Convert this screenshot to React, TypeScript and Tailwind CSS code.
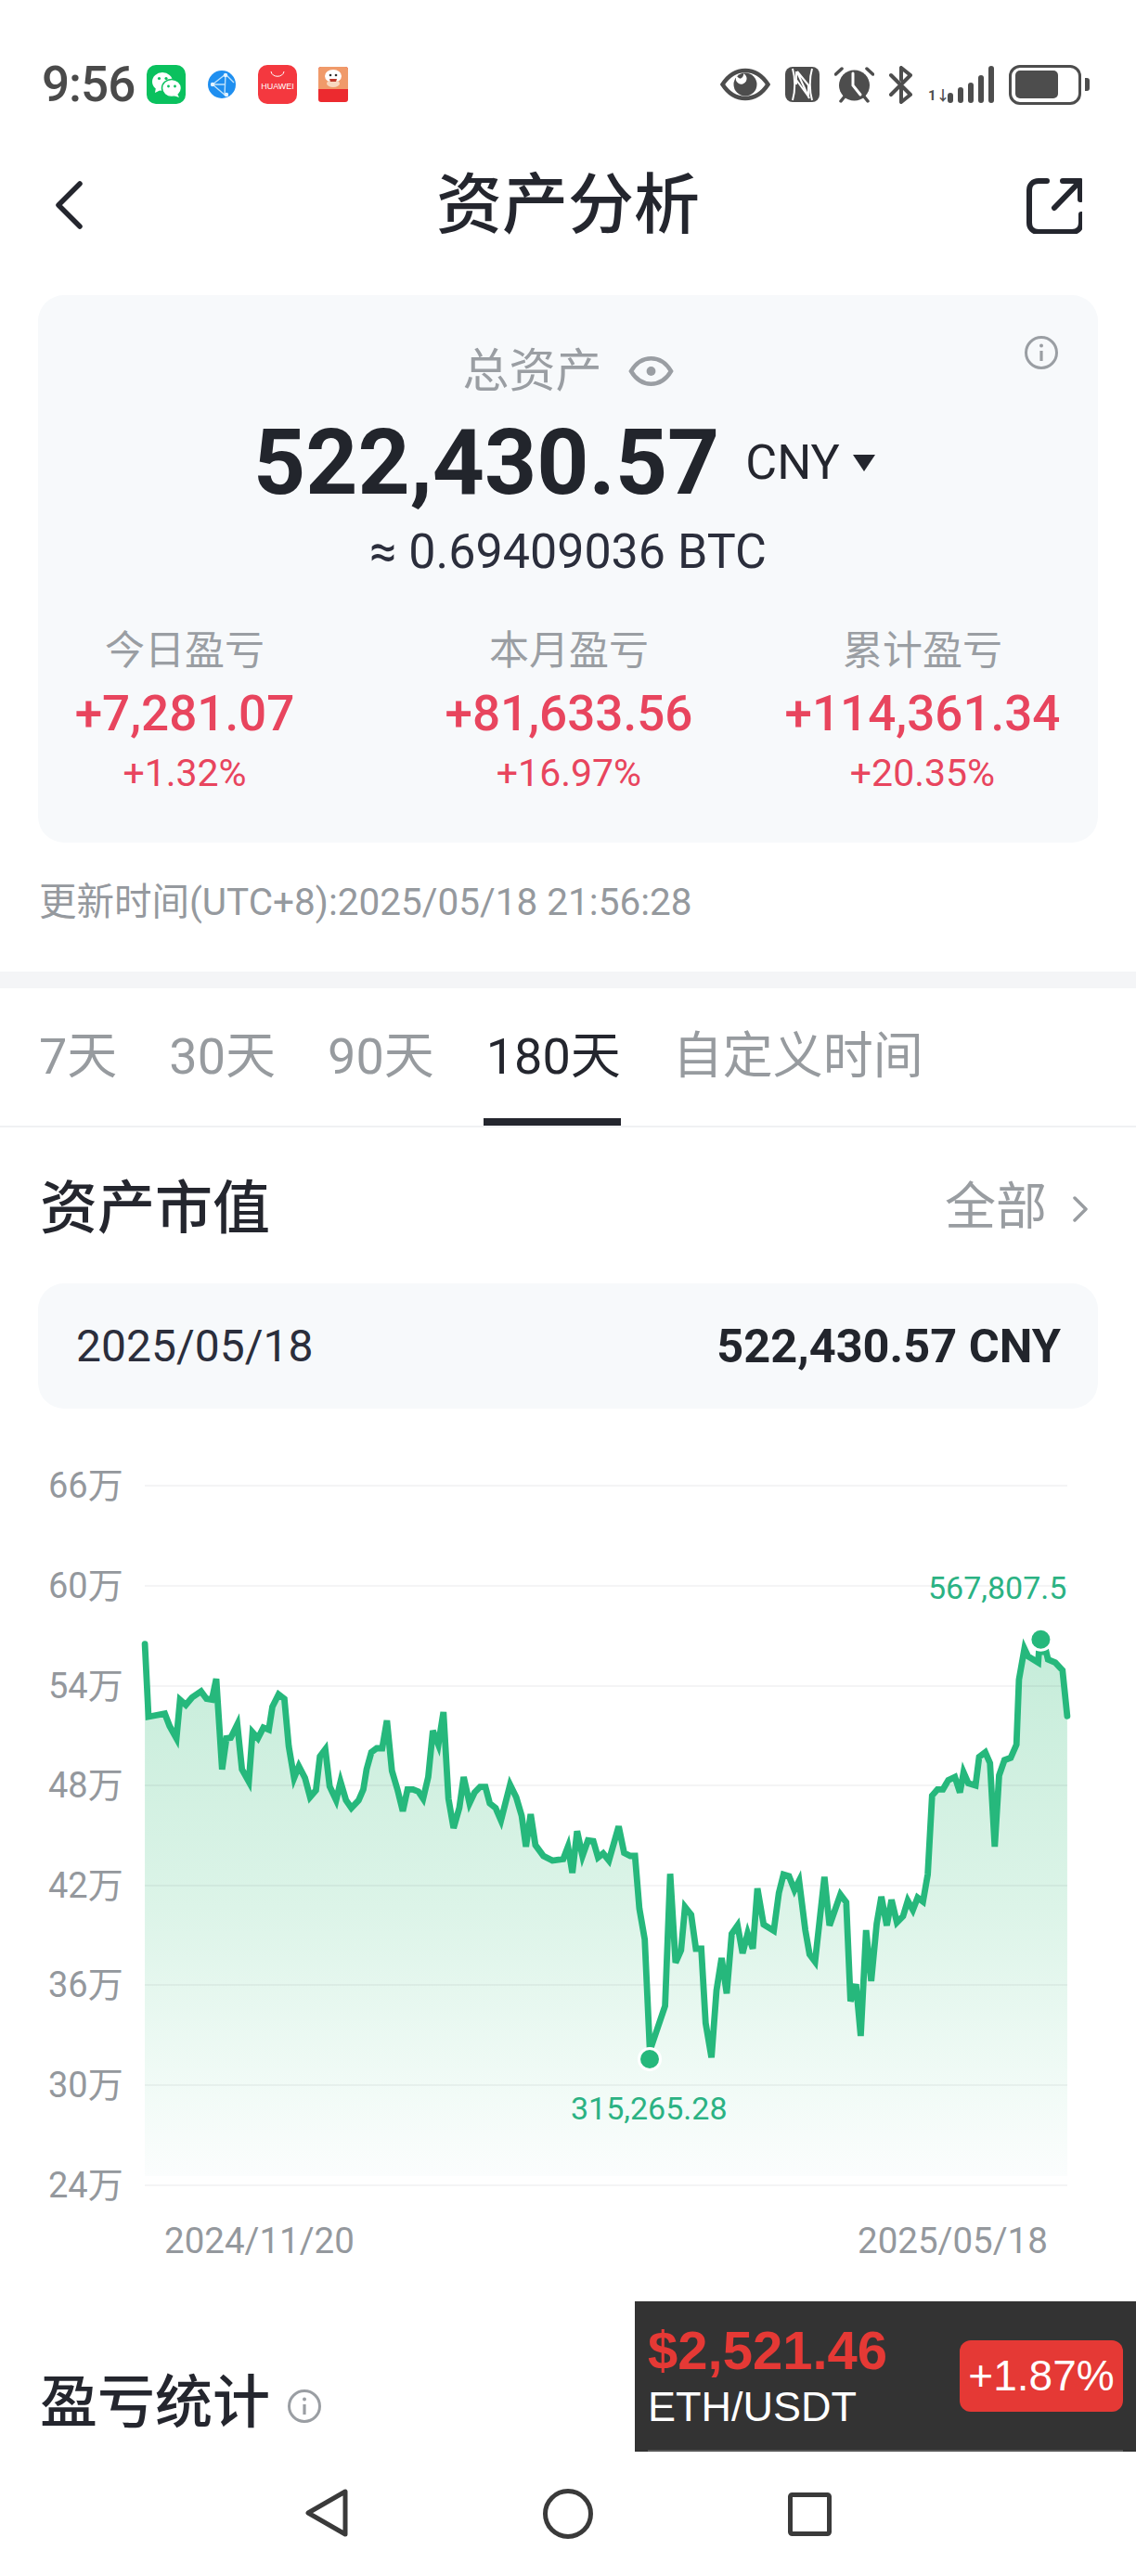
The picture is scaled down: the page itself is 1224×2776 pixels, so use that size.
import React from "react"

type Pt = [number, number]

// chart line traced off the screenshot crops, each run has its own origin
const fromCrop = (x0: number, y0: number, pts: Pt[]): Pt[] =>
  pts.map(([x, y]) => [x0 + x / 2.562, y0 + y / 3] as Pt)

const line: Pt[] = [
  ...fromCrop(0, 1560, [
    [400, 635], [410, 870], [455, 860], [468, 900], [487, 940], [497, 815], [513, 832], [530, 808], [555, 788], [570, 812],
    [585, 815], [597, 748], [613, 1040], [625, 940], [637, 938], [655, 895], [668, 1040], [687, 1080], [697, 920], [712, 940],
    [727, 905], [742, 912], [752, 838], [769, 798], [785, 812], [797, 965], [812, 1068], [825, 1030], [842, 1068], [856, 1130],
    [872, 1108], [883, 998], [898, 975], [910, 1095], [928, 1140], [940, 1080], [955, 1140], [970, 1165], [990, 1140], [1003, 1105],
    [1012, 1040], [1025, 985], [1040, 972], [1055, 972], [1068, 882], [1082, 1045], [1097, 1105], [1112, 1175], [1125, 1105], [1140, 1105],
    [1155, 1112], [1168, 1135], [1182, 1065], [1195, 915], [1210, 960], [1224, 855], [1238, 1135], [1252, 1230], [1268, 1165], [1280, 1065],
    [1296, 1150], [1310, 1115], [1325, 1097], [1340, 1097], [1352, 1150], [1368, 1165], [1383, 1205], [1408, 1090], [1425, 1130], [1440, 1190],
    [1452, 1290], [1465, 1185], [1478, 1285], [1500, 1320], [1525, 1335], [1555, 1330],
  ]),
  ...fromCrop(612, 1960, [
    [0, 90], [12, 175], [25, 40], [40, 120], [55, 70], [70, 72], [83, 125], [97, 112], [113, 135], [140, 25],
    [155, 110], [172, 120], [185, 120], [197, 290], [212, 390], [226, 750], [268, 605], [282, 178], [297, 465], [312, 425],
    [323, 285], [340, 310], [353, 420], [368, 420], [380, 660], [396, 772], [410, 555], [424, 450], [438, 565], [452, 372],
    [468, 345], [482, 435], [496, 370], [510, 420], [523, 225], [540, 342], [568, 362], [582, 240], [595, 180], [610, 185],
    [625, 230], [638, 200], [655, 360], [667, 438], [682, 462], [708, 188], [722, 345], [752, 245], [768, 270], [780, 590],
    [795, 535], [808, 702], [823, 360], [837, 525], [852, 340], [865, 252], [880, 345], [893, 262], [908, 335], [925, 315],
    [938, 265], [952, 295], [965, 255], [980, 268], [993, 180],
  ]),
  ...fromCrop(612, 1560, [
    [1005, 1125], [1020, 1105], [1035, 1105], [1050, 1075], [1068, 1065], [1082, 1115], [1092, 1050], [1105, 1085], [1125, 1092], [1135, 1000],
    [1152, 985], [1165, 1020], [1178, 1290], [1190, 1060], [1205, 1010], [1222, 1003], [1238, 960], [1245, 750], [1260, 650], [1270, 675],
    [1298, 695], [1300, 660], [1320, 660], [1325, 685], [1345, 695], [1365, 720], [1378, 868],
  ]),
]

const linePts = line.map(([x, y]) => `${x.toFixed(1)},${y.toFixed(1)}`).join(" ")
const fillPts = `156,2345 ${linePts} 1150,2345`

const yTicks = [
  { label: "66万", y: 1601 },
  { label: "60万", y: 1709 },
  { label: "54万", y: 1817 },
  { label: "48万", y: 1924 },
  { label: "42万", y: 2032 },
  { label: "36万", y: 2139 },
  { label: "30万", y: 2247 },
  { label: "24万", y: 2355 },
]

const stats = [
  { label: "今日盈亏", value: "+7,281.07", pct: "+1.32%" },
  { label: "本月盈亏", value: "+81,633.56", pct: "+16.97%" },
  { label: "累计盈亏", value: "+114,361.34", pct: "+20.35%" },
]

const tabs = ["7天", "30天", "90天", "180天", "自定义时间"]

function InfoIcon({ className }: { className?: string }) {
  return (
    <svg viewBox="0 0 38 38" className={className} fill="none" stroke="#9a9ea3" strokeWidth="3">
      <circle cx="19" cy="19" r="16.5" />
      <path d="M19 17v11" strokeWidth="3.2" />
      <circle cx="19" cy="11.5" r="2" fill="#9a9ea3" stroke="none" />
    </svg>
  )
}

function StatusLeft() {
  return (
    <div className="flex items-center">
      <span className="w-[99px] whitespace-nowrap text-[53px] leading-[44px] font-medium text-[#4a4a4a] tracking-[-1px]">9:56</span>
      <svg viewBox="0 0 42 42" className="ml-[14px] h-[42px] w-[42px]">
        <rect width="42" height="42" rx="10" fill="#0ac15e" />
        <ellipse cx="17" cy="18" rx="11" ry="10" fill="#fff" />
        <path d="M10 24l-1 6 6-3z" fill="#fff" />
        <ellipse cx="27" cy="25" rx="10.5" ry="9.5" fill="#fff" stroke="#0ac15e" strokeWidth="1.5" />
        <path d="M33 31l2 4-6-2z" fill="#fff" />
        <circle cx="13.5" cy="14.5" r="1.6" fill="#0ac15e" />
        <circle cx="21" cy="14.5" r="1.6" fill="#0ac15e" />
        <circle cx="23.5" cy="23" r="1.4" fill="#0ac15e" />
        <circle cx="30.5" cy="23" r="1.4" fill="#0ac15e" />
      </svg>
      <svg viewBox="0 0 30 30" className="ml-[24px] h-[30px] w-[30px]">
        <circle cx="15" cy="15" r="15" fill="#1f8ff0" />
        <path d="M5 15L19 4M5 15l14 12M19 4l-1 23M19 4l9 9M5 15l13 0" stroke="#bfe2fb" strokeWidth="1.4" fill="none" />
        <circle cx="19" cy="5" r="2.2" fill="#e4f3fe" />
        <circle cx="5" cy="15" r="2.2" fill="#e4f3fe" />
        <circle cx="20" cy="26" r="2.2" fill="#e4f3fe" />
      </svg>
      <div className="ml-[24px] flex h-[42px] w-[42px] flex-col items-center rounded-[10px] bg-[#f4383f]">
        <svg viewBox="0 0 16 8" className="mt-[6px] h-[8px] w-[16px]">
          <path d="M1 1c1 7 13 7 14 0" fill="none" stroke="#fff" strokeWidth="1" />
        </svg>
        <span className="mt-[4px] text-[9px] leading-[10px] text-white font-['Liberation_Sans',sans-serif]">HUAWEI</span>
      </div>
      <svg viewBox="0 0 32 38" className="ml-[23px] h-[38px] w-[32px]">
        <rect width="32" height="38" rx="3" fill="#ec2a2f" />
        <path d="M0 3a3 3 0 0 1 3-3h26a3 3 0 0 1 3 3v21H0z" fill="#f09a6a" />
        <ellipse cx="16" cy="10" rx="9" ry="7" fill="#fff" />
        <ellipse cx="16" cy="18" rx="7" ry="4" fill="#f8d8c0" />
        <circle cx="13" cy="9" r="1.3" fill="#333" />
        <circle cx="19" cy="9" r="1.3" fill="#333" />
        <path d="M12 13h8l-1 3h-6z" fill="#c0392b" />
      </svg>
    </div>
  )
}

function StatusRight() {
  return (
    <div className="flex items-center text-[#4d4d4d]">
      <svg viewBox="0 0 54 36" className="h-[36px] w-[54px]">
        <path d="M2.5 18C9 8 17 3 27 3s18 5 24.500 15C45 28 37 33 27 33S9 28 2.500 18z" fill="none" stroke="currentColor" strokeWidth="4.500" />
        <circle cx="27" cy="18" r="12.500" fill="currentColor" />
        <path d="M21 12a7 7 0 1 0 9 0c-1 3-3 5-5 5s-4-3-4-5z" fill="#fff" transform="rotate(-15 27 15) translate(2 -4) scale(.85)" />
      </svg>
      <svg viewBox="0 0 37 38" className="ml-[16px] h-[38px] w-[37px]">
        <rect width="37" height="38" rx="8" fill="currentColor" />
        <path d="M8 2c3 10 3 24 0 34M29 2c-3 10-3 24 0 34" stroke="#fff" strokeWidth="2" fill="none" />
        <path d="M12 5v14M13 6l13 28M25 19v14M12 14l13 18M13 5l13 16" stroke="#fff" strokeWidth="2" fill="none" />
      </svg>
      <svg viewBox="0 0 43 40" className="ml-[16px] h-[40px] w-[43px]">
        <circle cx="21.500" cy="21" r="16.500" fill="currentColor" />
        <path d="M1.500 9L8 3M41.500 9L35 3M7 38l4-5M36 38l-4-5" stroke="currentColor" strokeWidth="3.500" strokeLinecap="round" />
        <path d="M20 8v13l8 10" stroke="#fff" strokeWidth="3" fill="none" strokeLinecap="round" />
      </svg>
      <svg viewBox="0 0 25 41" className="ml-[16px] h-[41px] w-[25px]" fill="none" stroke="currentColor" strokeWidth="4" strokeLinejoin="round" strokeLinecap="round">
        <path d="M2 10l21 21-10 8V22M2 31L23 10 13 2v13" />
      </svg>
      <div className="ml-[17px] flex h-[40px] items-end">
        <span className="w-[18px] text-[15px] leading-[16px] font-bold">1↓</span>
        <div className="ml-[3px] h-[11px] w-[6px] rounded-full bg-current" />
        <div className="ml-[5px] h-[17px] w-[6px] rounded-full bg-current" />
        <div className="ml-[5px] h-[22px] w-[6px] rounded-full bg-current" />
        <div className="ml-[5px] h-[30px] w-[6px] rounded-full bg-current" />
        <div className="ml-[5px] h-[40px] w-[6px] rounded-full bg-current" />
      </div>
      <div className="ml-[16px] flex h-[43px] w-[78px] items-center rounded-[12px] border-[3px] border-current px-[4px]">
        <div className="h-[30px] w-[46px] rounded-[5px] bg-current" />
      </div>
      <div className="ml-[4px] h-[14px] w-[5px] rounded-r-[3px] bg-current" />
    </div>
  )
}

function Chart() {
  return (
    <svg viewBox="0 1560 1224 900" className="mt-[42px] h-[900px] w-[1224px]">
      <defs>
        <linearGradient id="area" gradientUnits="userSpaceOnUse" x1="0" y1="1766" x2="0" y2="2345">
          <stop offset="0" stopColor="#c5ecd9" />
          <stop offset="0.5" stopColor="#dcf4e8" />
          <stop offset="0.85" stopColor="#f2fbf7" />
          <stop offset="1" stopColor="#fbfdfd" />
        </linearGradient>
      </defs>
      <polygon points={fillPts} fill="url(#area)" />
      {yTicks.map((t) => (
        <g key={t.label}>
          <line x1="156" x2="1150" y1={t.y} y2={t.y} stroke="#26303c" strokeOpacity="0.05" strokeWidth="2" />
          <text x="52" y={t.y + 13} fontSize="38" fill="#94989d">{t.label}</text>
        </g>
      ))}
      <polyline points={linePts} fill="none" stroke="#26b87c" strokeWidth="6.800" strokeLinecap="round" />
      <circle cx="1121.400" cy="1766.700" r="13" fill="#fff" />
      <circle cx="1121.400" cy="1766.700" r="10" fill="#26b87c" />
      <circle cx="700" cy="2219" r="13" fill="#fff" />
      <circle cx="700" cy="2219" r="10" fill="#26b87c" />
      <text x="1000" y="1723" fontSize="34" fill="#2bb283">567,807.5</text>
      <text x="615" y="2284" fontSize="34" fill="#2bb283">315,265.28</text>
      <text x="177" y="2428" fontSize="38.500" fill="#94989d">2024/11/20</text>
      <text x="924" y="2428" fontSize="38.500" fill="#94989d">2025/05/18</text>
    </svg>
  )
}

export default function App() {
  return (
    <div className="relative flex h-[2776px] w-[1224px] flex-col overflow-hidden bg-white font-[Roboto,'Noto_Sans_CJK_SC',sans-serif] text-[#24262e]">
      <div className="flex-1">
        {/* status bar */}
        <div className="mt-[69px] flex h-[44px] items-center justify-between pl-[45px] pr-[50px]">
          <StatusLeft />
          <StatusRight />
        </div>

        {/* nav */}
        <div className="mt-[46px] flex h-[120px] items-center justify-between pl-[58px] pr-[58px]">
          <div className="mt-[3px] w-[60px]">
            <svg viewBox="0 0 32 52" className="h-[52px] w-[32px]" fill="none" stroke="#24262e" strokeWidth="5.500" strokeLinecap="round" strokeLinejoin="round">
              <path d="M28 3L5 26l23 23" />
            </svg>
          </div>
          <h1 className="pt-[3px] text-[71px] leading-[120px] font-medium">资产分析</h1>
          <svg viewBox="0 0 60 60" className="mt-[5px] h-[60px] w-[60px]" fill="none" stroke="#24262e" strokeWidth="6" strokeLinecap="round" strokeLinejoin="round">
            <path d="M22 3h-9C7 3 3 7 3 13v35c0 6 4 10 10 10h36c6 0 10-4 10-10v-9" />
            <path d="M30 32L58 3M39 3h19v20" />
          </svg>
        </div>

        {/* total assets card */}
        <div className="relative mx-[41px] mt-[39px] h-[590px] rounded-[28px] bg-[#f7f9fb] pt-[52px]">
          <InfoIcon className="absolute right-[42px] top-[43px] h-[38px] w-[38px]" />
          <div className="flex h-[60px] items-center justify-center text-[50px] text-[#9a9ea3]">
            <span>总资产</span>
            <svg viewBox="0 0 50 34" className="ml-[28px] h-[34px] w-[49px]" fill="none" stroke="#9a9ea3" strokeWidth="4.500">
              <path d="M3 17C9 7 16 3 25 3s16 4 22 14c-6 10-13 14-22 14S9 27 3 17z" />
              <circle cx="25" cy="17" r="5" fill="#9a9ea3" stroke="none" />
            </svg>
          </div>
          <div className="mt-[14px] flex h-[110px] items-center pl-[232px]">
            <span className="text-[98px] leading-[110px] font-bold text-[#22252c]">522,430.57</span>
            <span className="ml-[28px] text-[52px] leading-[60px]">CNY</span>
            <svg viewBox="0 0 24 18" className="ml-[14px] h-[18px] w-[24px]">
              <path d="M0 0h24L12 18z" fill="#24262e" />
            </svg>
          </div>
          <div className="mt-[11px] h-[60px] text-center text-[52px] leading-[60px] text-[#2b2e3c]">≈ 0.69409036 BTC</div>
          <div className="mt-[48px] grid grid-cols-[316px_512px_250px] justify-items-center">
            {stats.map((s) => (
              <div key={s.label} className="flex flex-col items-center whitespace-nowrap">
                <div className="h-[56px] text-[43px] leading-[56px] text-[#9a9ea3]">{s.label}</div>
                <div className="mt-[8px] h-[64px] text-[53px] leading-[64px] font-medium text-[#e8455e]">{s.value}</div>
                <div className="mt-[8px] h-[48px] text-[41px] leading-[48px] text-[#e8455e]">{s.pct}</div>
              </div>
            ))}
          </div>
        </div>

        <div className="mt-[40px] h-[48px] pl-[42px] text-[40.5px] leading-[48px] text-[#95999e]">更新时间(UTC+8):2025/05/18 21:56:28</div>

        <div className="mt-[51px] h-[18px] bg-[#f4f5f7]" />

        {/* range tabs */}
        <div className="flex h-[150px] gap-[56px] border-b-2 border-[#f0f1f3] pl-[42px]">
          {tabs.map((t) => (
            <div key={t} className={t === "180天" ? "relative text-[54px] leading-[148px] text-[#24262e]" : "relative text-[54px] leading-[148px] text-[#979b9f]"}>
              {t}
              {t === "180天" && <div className="absolute -left-[3px] right-0 bottom-0 h-[8px] bg-[#24262e]" />}
            </div>
          ))}
        </div>

        {/* market value */}
        <div className="mt-[48px] flex h-[80px] items-center justify-between pl-[43px] pr-[52px]">
          <h2 className="text-[62px] leading-[80px] font-medium">资产市值</h2>
          <div className="flex items-center text-[#999da1]">
            <span className="pb-[6px] text-[55px] leading-[70px]">全部</span>
            <svg viewBox="0 0 16 28" className="ml-[28px] h-[28px] w-[16px]" fill="none" stroke="#999da1" strokeWidth="3.500" strokeLinecap="round" strokeLinejoin="round">
              <path d="M2 2l12 12L2 26" />
            </svg>
          </div>
        </div>
        <div className="mx-[41px] mt-[40px] flex h-[135px] items-center justify-between rounded-[28px] bg-[#f7f9fb] pl-[41px] pr-[40px]">
          <span className="text-[48px] text-[#2b2e3c]">2025/05/18</span>
          <span className="text-[50.5px] font-bold text-[#22252c]">522,430.57 CNY</span>
        </div>

        <Chart />

        <div className="mt-[90px] flex h-[80px] items-center pl-[43px]">
          <h2 className="text-[62px] leading-[80px] font-medium">盈亏统计</h2>
          <InfoIcon className="ml-[18px] mt-[6px] h-[38px] w-[38px]" />
        </div>
      </div>

      {/* floating price widget */}
      <div className="absolute right-0 top-[2480px] flex h-[162px] w-[540px] items-center bg-[#333333] font-['Liberation_Sans',sans-serif]">
        <div className="flex flex-col pl-[14px] pt-[3px]">
          <span className="text-[58px] leading-[62px] font-bold text-[#e53935]">$2,521.46</span>
          <span className="text-[45px] leading-[60px] text-white">ETH/USDT</span>
        </div>
        <div className="absolute left-[350px] top-[42px] flex h-[77px] w-[176px] items-center justify-center rounded-[12px] bg-[#e53935] text-[46px] text-white">+1.87%</div>
        <div className="absolute bottom-0 left-[14px] right-[14px] h-[2px] bg-[#555555]" />
      </div>

      {/* android nav */}
      <div className="flex h-[134px] shrink-0 items-start bg-white pl-[328px] pt-[40px]">
        <svg viewBox="0 0 47 52" className="h-[52px] w-[47px]" fill="none" stroke="#3a3a3a" strokeWidth="5" strokeLinejoin="round">
          <path d="M44 3v46L4 26z" />
        </svg>
        <svg viewBox="0 0 54 54" className="ml-[210px] h-[54px] w-[54px]" fill="none" stroke="#3a3a3a" strokeWidth="5">
          <circle cx="27" cy="27" r="24.500" />
        </svg>
        <svg viewBox="0 0 47 47" className="ml-[210px] mt-[4px] h-[47px] w-[47px]" fill="none" stroke="#3a3a3a" strokeWidth="5" strokeLinejoin="round">
          <rect x="2.500" y="2.500" width="42" height="42" rx="2" />
        </svg>
      </div>
    </div>
  )
}
